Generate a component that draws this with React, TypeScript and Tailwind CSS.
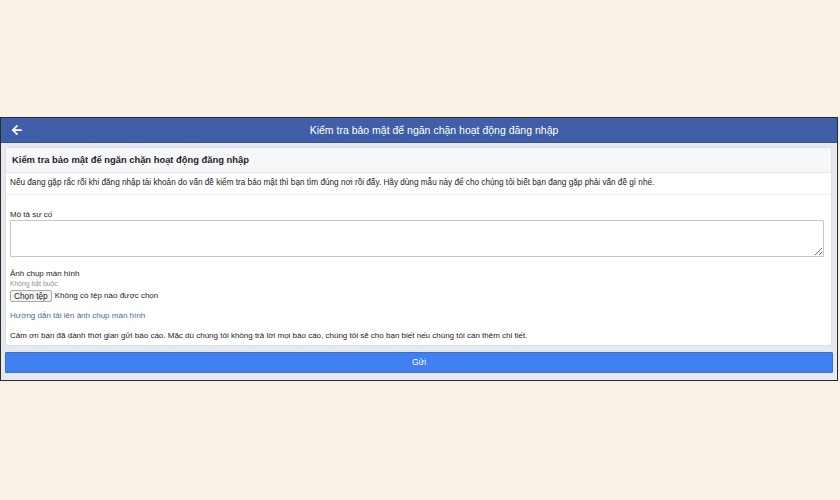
import { ArrowLeft } from 'lucide-react'

export default function App() {
  return (
    <div className="w-[840px] h-[500px] bg-[#f7f1e6] pt-[117px] font-['Liberation_Sans',Arial,sans-serif]">
      <div className="w-[838px] border border-[#2b2b2b] bg-[#e6e9ef]">
        <div className="relative h-[25px] bg-[#3f5fa8] border-b border-[#34508f] flex items-center justify-center pl-[30px]">
          <ArrowLeft className="absolute left-[9px] top-[5px] w-[14px] h-[14px] text-white" strokeWidth={3} />
          <span className="text-white text-[10.5px] leading-none">Kiểm tra bảo mật để ngăn chặn hoạt động đăng nhập</span>
        </div>

        <div className="px-[4px] pt-[4px] pb-[7px]">
          <div className="bg-white border border-[#dddfe2] mr-[1px]">
            <div className="h-[25px] bg-[#f6f7f9] border-b border-[#e5e6e9] flex items-center px-[6px]">
              <span className="text-[#1d2129] text-[9.4px] font-bold">Kiểm tra bảo mật để ngăn chặn hoạt động đăng nhập</span>
            </div>
            <div className="h-[22px] border-b border-[#eceef1] flex items-center px-[4px]">
              <span className="text-[#1d2129] text-[8.2px]">
                Nếu đang gặp rắc rối khi đăng nhập tài khoản do vấn đề kiểm tra bảo mật thì bạn tìm đúng nơi rồi đấy. Hãy dùng mẫu này để cho chúng tôi biết bạn đang gặp phải vấn đề gì nhé.
              </span>
            </div>

            <div className="px-[4px] pt-[15px] pb-[4px] text-[#1d2129]">
              <div className="text-[8px] leading-[10px]">Mô tả sự cố</div>
              <textarea className="block w-[814px] h-[37px] border border-[#c4c6ca] rounded-[1px] resize-y" />

              <div className="mt-[12px] text-[8px] leading-[10px]">Ảnh chụp màn hình</div>
              <div className="text-[6.8px] leading-[10px] text-[#90949c]">Không bắt buộc</div>
              <div className="flex items-center gap-[3px] mt-[1px]">
                <span className="border border-[#a8a8a8] rounded-[2px] bg-[#f4f4f4] px-[3px] h-[12px] flex items-center text-[8.3px] text-[#1d2129]">Chọn tệp</span>
                <span className="text-[8px]">Không có tệp nào được chọn</span>
              </div>

              <div className="mt-[9px] text-[8px] leading-[10px] text-[#4b67a1]">Hướng dẫn tải lên ảnh chụp màn hình</div>
              <div className="mt-[10px] text-[8px] leading-[10px]">
                Cảm ơn bạn đã dành thời gian gửi báo cáo. Mặc dù chúng tôi không trả lời mọi báo cáo, chúng tôi sẽ cho bạn biết nếu chúng tôi cần thêm chi tiết.
              </div>
            </div>
          </div>

          <div className="mt-[6px] h-[21px] bg-[#4080f0] border border-[#3a6fd0] rounded-[1px] flex items-center justify-center">
            <span className="text-white text-[8.5px]">Gửi</span>
          </div>
        </div>
      </div>
    </div>
  )
}
